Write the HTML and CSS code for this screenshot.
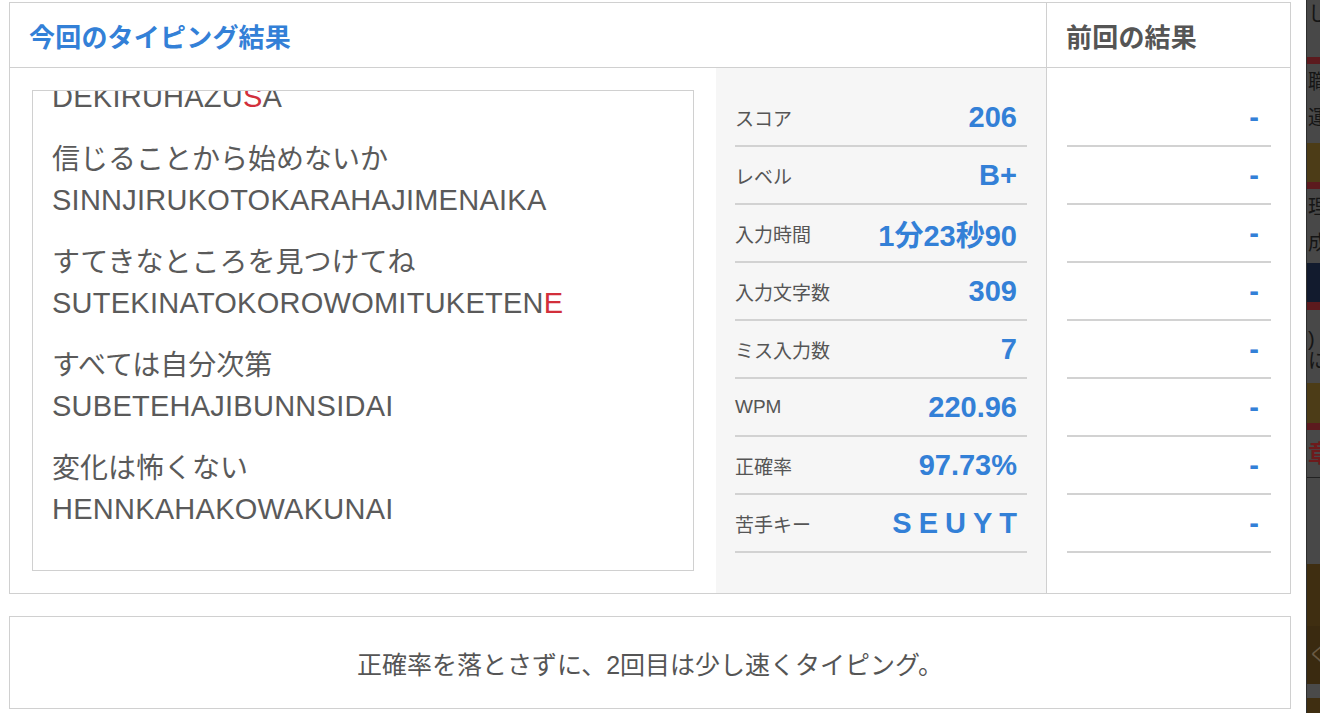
FILE: index.html
```html
<!DOCTYPE html>
<html lang="ja">
<head>
<meta charset="utf-8">
<title>タイピング結果</title>
<link rel="stylesheet" href="styles.css">
</head>
<body>
<div class="page">
  <div class="modal">
    <section class="result-card">
      <div class="col-current">
        <h2 class="head head-current">今回のタイピング結果</h2>
        <div class="current-body">
          <div class="text-col">
            <div class="word-box">
              <div class="word-list">
                <div class="word"><p class="jp">できるはずさ</p><p class="romaji">DEKIRUHAZU<span class="miss">S</span>A</p></div>
                <div class="word"><p class="jp">信じることから始めないか</p><p class="romaji">SINNJIRUKOTOKARAHAJIMENAIKA</p></div>
                <div class="word"><p class="jp">すてきなところを見つけてね</p><p class="romaji">SUTEKINATOKOROWOMITUKETEN<span class="miss">E</span></p></div>
                <div class="word"><p class="jp">すべては自分次第</p><p class="romaji">SUBETEHAJIBUNNSIDAI</p></div>
                <div class="word"><p class="jp">変化は怖くない</p><p class="romaji">HENNKAHAKOWAKUNAI</p></div>
              </div>
            </div>
          </div>
          <div class="stats-col">
            <div class="stat"><span class="stat-label">スコア</span><span class="stat-value">206</span></div>
            <div class="stat"><span class="stat-label">レベル</span><span class="stat-value">B+</span></div>
            <div class="stat"><span class="stat-label">入力時間</span><span class="stat-value">1分23秒90</span></div>
            <div class="stat"><span class="stat-label">入力文字数</span><span class="stat-value">309</span></div>
            <div class="stat"><span class="stat-label">ミス入力数</span><span class="stat-value">7</span></div>
            <div class="stat"><span class="stat-label">WPM</span><span class="stat-value">220.96</span></div>
            <div class="stat"><span class="stat-label">正確率</span><span class="stat-value">97.73%</span></div>
            <div class="stat"><span class="stat-label">苦手キー</span><span class="stat-value keys">SEUYT</span></div>
          </div>
        </div>
      </div>
      <div class="col-prev">
        <h2 class="head head-prev">前回の結果</h2>
        <div class="prev-body">
          <div class="prev-row">-</div>
          <div class="prev-row">-</div>
          <div class="prev-row">-</div>
          <div class="prev-row">-</div>
          <div class="prev-row">-</div>
          <div class="prev-row">-</div>
          <div class="prev-row">-</div>
          <div class="prev-row">-</div>
        </div>
      </div>
    </section>
    <div class="advice">正確率を落とさずに、2回目は少し速くタイピング。</div>
  </div>
  <div class="backdrop" aria-hidden="true">
    <div class="bd bd-top"><span>し</span></div>
    <div class="bd bd-rule"></div>
    <div class="bd bd-text bd-h79"><span>職</span><span>運</span></div>
    <div class="bd bd-olive"></div>
    <div class="bd bd-rule"></div>
    <div class="bd bd-text bd-h74"><span>理</span><span>成</span></div>
    <div class="bd bd-navy"></div>
    <div class="bd bd-rule bd-rule-8"></div>
    <div class="bd bd-tight"><span>)</span><span>に</span></div>
    <div class="bd bd-olive bd-olive-40"></div>
    <div class="bd bd-rule"></div>
    <div class="bd bd-red-text"><span>章</span></div>
    <div class="bd bd-line"></div>
    <div class="bd bd-gray"></div>
    <div class="bd bd-brown"></div>
    <div class="bd bd-brown-dark"><span>く</span></div>
    <div class="bd bd-gray-band"></div>
    <div class="bd bd-brown bd-brown-end"></div>
  </div>
</div>
</body>
</html>
```

FILE: styles.css
```css
body {
  margin: 0;
  background: #ffffff;
  color: #555555;
  font-family: "Liberation Sans", "Noto Sans CJK JP", sans-serif;
}

.page {
  display: flex;
  width: 1320px;
  height: 713px;
  overflow: hidden;
}

.modal {
  flex: 0 0 1306px;
  box-sizing: border-box;
  padding: 2px 15px 0 9px;
  background: #ffffff;
}

/* result card */
.result-card {
  display: flex;
  width: 1282px;
  box-sizing: border-box;
  border: 1px solid #d0d0d0;
}

.col-current {
  width: 1036px;
  border-right: 1px solid #d0d0d0;
}

.col-prev {
  width: 243px;
}

.head {
  margin: 0;
  height: 65px;
  box-sizing: border-box;
  border-bottom: 1px solid #d0d0d0;
  display: flex;
  align-items: center;
  padding-left: 19px;
  font-size: 26px;
  font-weight: 700;
  letter-spacing: 0.2px;
}

.head-current {
  color: #3380d7;
}

.head-prev {
  color: #555555;
}

.current-body {
  display: flex;
  height: 525px;
}

.text-col {
  width: 706px;
  box-sizing: border-box;
  padding: 22px;
}

.word-box {
  height: 481px;
  box-sizing: border-box;
  border: 1px solid #d0d0d0;
  overflow: hidden;
  padding-left: 19px;
}

.word-list {
  margin-top: -54px;
}

.word {
  margin-bottom: 23px;
}

.word p {
  margin: 0;
  height: 40px;
  line-height: 40px;
  white-space: nowrap;
  color: #5a5a5a;
}

.jp {
  font-size: 28px;
}

.romaji {
  font-size: 29px;
  letter-spacing: 0.25px;
}

.miss {
  color: #d22f3b;
}

/* stats */
.stats-col {
  width: 330px;
  box-sizing: border-box;
  background: #f6f6f6;
  padding: 21px 19px 0 19px;
}

.stat {
  display: flex;
  justify-content: space-between;
  align-items: center;
  height: 58px;
  box-sizing: border-box;
  border-bottom: 2px solid #d2d2d2;
  padding-right: 10px;
}

.stat-label {
  font-size: 19px;
  color: #555555;
}

.stat-value {
  font-size: 29px;
  font-weight: 700;
  color: #3380d7;
}

.keys {
  letter-spacing: 7px;
  margin-right: -7px;
}

.prev-body {
  padding: 21px 19px 0 20px;
}

.prev-row {
  height: 58px;
  box-sizing: border-box;
  border-bottom: 2px solid #d2d2d2;
  display: flex;
  justify-content: flex-end;
  align-items: center;
  padding-right: 12px;
  font-size: 29px;
  font-weight: 700;
  color: #3380d7;
}

/* advice */
.advice {
  margin-top: 22px;
  height: 93px;
  box-sizing: border-box;
  border: 1px solid #d0d0d0;
  display: flex;
  align-items: center;
  justify-content: center;
  font-size: 25px;
  color: #555555;
}

/* dimmed page behind the modal */
.backdrop {
  flex: 0 0 14px;
  box-sizing: border-box;
  background: #484848;
  border-left: 1px solid #2e2e2e;
  display: flex;
  flex-direction: column;
  overflow: hidden;
}

.bd {
  flex: 0 0 auto;
  overflow: hidden;
  white-space: nowrap;
  color: #151515;
  font-size: 20px;
}

.bd span {
  display: block;
  margin-left: 1px;
}

.bd-top {
  height: 57px;
  line-height: 28px;
}

.bd-rule {
  height: 7px;
  background: #5c1a1e;
}

.bd-rule-8 {
  height: 8px;
}

.bd-text {
  line-height: 36px;
}

.bd-h79 {
  height: 79px;
}

.bd-h74 {
  height: 74px;
}

.bd-olive {
  height: 39px;
  background: #4c3c17;
}

.bd-olive-40 {
  height: 40px;
}

.bd-navy {
  height: 39px;
  background: #121b2e;
}

.bd-tight {
  height: 73px;
  padding-top: 18px;
  box-sizing: border-box;
  line-height: 22px;
}

.bd-red-text {
  height: 47px;
  line-height: 47px;
  color: #6e1a1c;
  font-weight: 700;
  font-size: 24px;
}

.bd-line {
  height: 1px;
  background: #222222;
}

.bd-gray {
  height: 86px;
}

.bd-brown {
  height: 62px;
  background: #3f2e11;
}

.bd-brown-dark {
  height: 58px;
  background: #3a2a10;
  color: #6a5a44;
  line-height: 58px;
}

.bd-gray-band {
  height: 14px;
  background: #4a4a4a;
}

.bd-brown-end {
  height: 20px;
}
```
